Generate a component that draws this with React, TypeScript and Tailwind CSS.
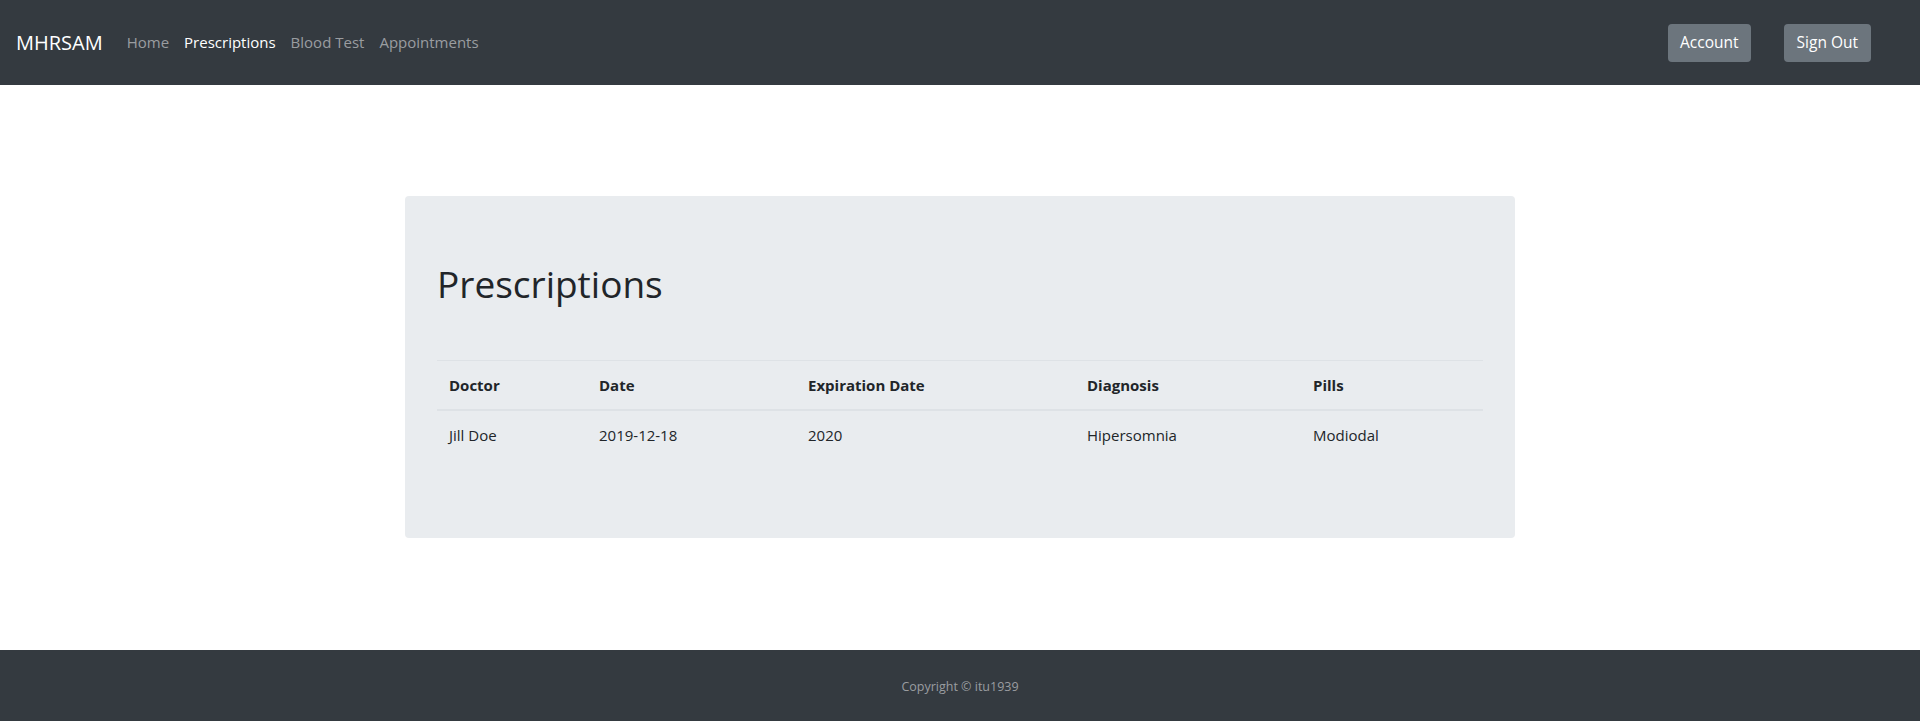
import React from 'react';

const navLinks = [
  { name: 'Home', active: false },
  { name: 'Prescriptions', active: true },
  { name: 'Blood Test', active: false },
  { name: 'Appointments', active: false },
];

const prescriptions = [
  {
    doctor: 'Jill Doe',
    date: '2019-12-18',
    expiration: '2020',
    diagnosis: 'Hipersomnia',
    pills: 'Modiodal',
  },
];

const App: React.FC = () => {
  return (
    <div className="min-h-screen bg-white text-[#212529]" style={{ fontFamily: '"Open Sans", "Noto Sans", sans-serif' }}>
      {/* Navbar */}
      <nav className="h-[85px] bg-[#343a40] flex items-center pl-4 pr-[49px]">
        <span className="text-white text-[20px] mr-6">MHRSAM</span>
        <div className="flex items-center gap-[15px] text-[15px]">
          {navLinks.map((link) => (
            <a
              key={link.name}
              href="#"
              className={link.active ? 'text-white' : 'text-[#9a9da0]'}
            >
              {link.name}
            </a>
          ))}
        </div>
        <div className="ml-auto flex items-center gap-[33px]">
          <button className="h-[38px] px-3 rounded bg-[#6c757d] text-white text-[15.5px]">Account</button>
          <button className="h-[38px] px-[13px] rounded bg-[#6c757d] text-white text-[15.5px]">Sign Out</button>
        </div>
      </nav>

      {/* Main */}
      <main className="h-[565px] pt-[111px]">
        <div className="mx-auto w-[1110px] bg-[#e9ecef] rounded pt-16 pb-[63px] px-8">
          <h1 className="text-[37px] leading-[48px] font-normal mb-[52px]">Prescriptions</h1>
          <table className="w-full text-[15px] leading-6 border-collapse mb-4">
            <thead>
              <tr className="border-t border-b-2 border-[#dee2e6] text-left">
                <th className="w-[150px] px-3 py-3 font-bold">Doctor</th>
                <th className="w-[209px] px-3 py-3 font-bold">Date</th>
                <th className="w-[279px] px-3 py-3 font-bold">Expiration Date</th>
                <th className="w-[226px] px-3 py-3 font-bold">Diagnosis</th>
                <th className="px-3 py-3 font-bold">Pills</th>
              </tr>
            </thead>
            <tbody>
              {prescriptions.map((p, i) => (
                <tr key={i}>
                  <td className="px-3 py-3">{p.doctor}</td>
                  <td className="px-3 py-3">{p.date}</td>
                  <td className="px-3 py-3">{p.expiration}</td>
                  <td className="px-3 py-3">{p.diagnosis}</td>
                  <td className="px-3 py-3">{p.pills}</td>
                </tr>
              ))}
            </tbody>
          </table>
        </div>
      </main>

      {/* Footer */}
      <footer className="h-[71px] bg-[#343a40] flex items-center justify-center pt-1">
        <span className="text-[12.5px] text-[#9a9da0]">Copyright © itu1939</span>
      </footer>
    </div>
  );
};

export default App;
